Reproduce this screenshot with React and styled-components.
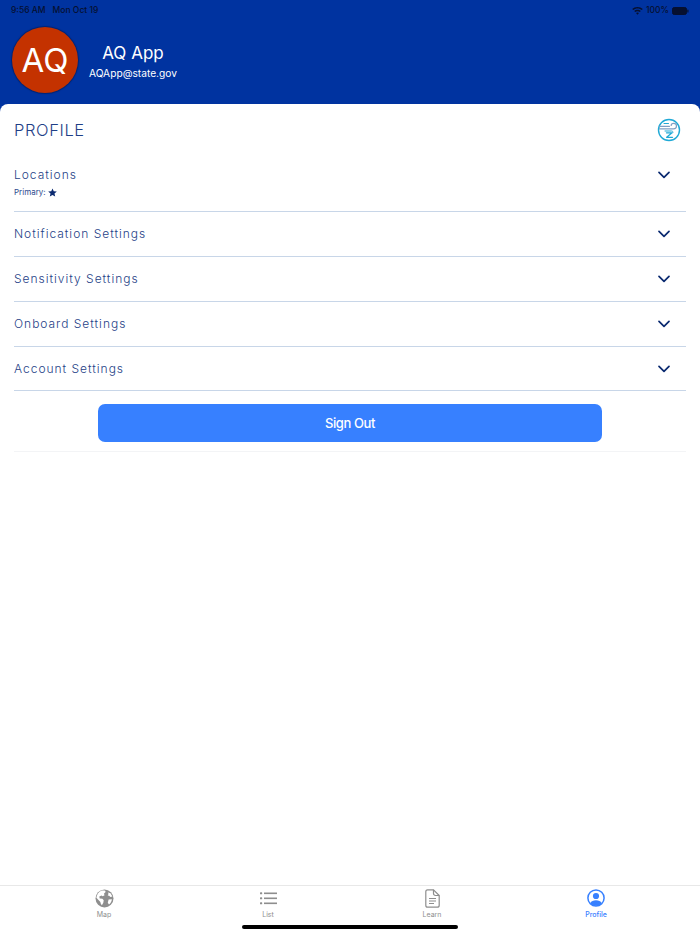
import React from "react";
import styled, { createGlobalStyle } from "styled-components";

const Global = createGlobalStyle`
  html, body { margin: 0; padding: 0; background: #fff; }
  body { font-family: Inter, "Liberation Sans", sans-serif; -webkit-font-smoothing: antialiased; }
  * { box-sizing: border-box; }
`;

const Page = styled.div`
  width: 700px;
  height: 934px;
  display: flex;
  flex-direction: column;
  overflow: hidden;
  background: #0033a0;
`;
const StatusBar = styled.div`
  height: 18px;
  padding: 3px 11px 0 11px;
  display: flex;
  justify-content: space-between;
  font-size: 8.5px;
  font-weight: 500;
  line-height: 11px;
  color: #061030;
`;
const StatusGroup = styled.div`
  display: flex;
  align-items: center;
  gap: ${(p) => p.$gap || 4}px;
`;
const Header = styled.div`
  height: 86px;
  padding: 9px 0 0 12px;
  display: flex;
  align-items: flex-start;
`;
const Avatar = styled.div`
  width: 66px;
  height: 66px;
  border-radius: 50%;
  background: #c43200;
  color: #fff;
  font-size: 33px;
  display: flex;
  align-items: center;
  justify-content: center;
  box-shadow: 0 0 1px 1px rgba(0, 20, 70, 0.5);
`;
const HeaderText = styled.div`
  margin: 15px 0 0 11px;
  display: flex;
  flex-direction: column;
  align-items: center;
  color: #fff;
`;
const UserName = styled.div`
  font-size: 17px;
  line-height: 22px;
`;
const UserMail = styled.div`
  margin-top: 2px;
  font-size: 10.2px;
  line-height: 14px;
`;
const Sheet = styled.div`
  flex: 1;
  background: #fff;
  border-radius: 8px 8px 0 0;
  display: flex;
  flex-direction: column;
  min-height: 0;
`;
const Content = styled.div`
  flex: 1;
  padding: 0 14px;
`;
const TitleRow = styled.div`
  height: 52px;
  padding-right: 5px;
  display: flex;
  align-items: center;
  justify-content: space-between;
`;
const Title = styled.h1`
  margin: 0;
  font-size: 16.5px;
  font-weight: 300;
  letter-spacing: 0.6px;
  color: #1f3f87;
`;
const Row = styled.div`
  height: ${(p) => (p.$tall ? "56px" : "45px")};
  border-bottom: 1px solid #c8d6e8;
  padding: ${(p) => (p.$tall ? "12px" : "0")} 16px 0 0;
  display: flex;
  align-items: ${(p) => (p.$tall ? "flex-start" : "center")};
  justify-content: space-between;
  &:nth-child(6) { height: 44px; }
`;
const RowLabel = styled.div`
  font-size: 12px;
  font-weight: 300;
  line-height: 14px;
  letter-spacing: 0.98px;
  color: #1f3f87;
`;
const RowSub = styled.div`
  margin-top: 5px;
  display: flex;
  align-items: center;
  gap: 2px;
  font-size: 8px;
  line-height: 11px;
  color: #2c4a8e;
  svg { margin-top: -1px; }
`;
const ChevronBox = styled.div`
  display: flex;
  margin-top: ${(p) => (p.$tall ? "3px" : "0")};
`;
const ButtonWrap = styled.div`
  padding: 13px 84px 9px;
  border-bottom: 1px solid #f3f4f6;
`;
const SignOut = styled.button`
  width: 100%;
  height: 38px;
  border: 0;
  border-radius: 7px;
  background: #3780ff;
  color: #fff;
  font-family: inherit;
  font-size: 13px;
  font-weight: 500;
  letter-spacing: -0.4px;
`;
const TabBar = styled.div`
  height: 49px;
  padding: 0 22px;
  border-top: 1px solid #e8e8e8;
  background: #fff;
  display: grid;
  grid-template-columns: repeat(4, 164px);
  position: relative;
`;
const Tab = styled.div`
  padding-top: 3px;
  display: flex;
  flex-direction: column;
  align-items: center;
  color: ${(p) => (p.$active ? "#3780ff" : "#8e8e8e")};
`;
const TabIcon = styled.div`
  height: 19px;
  display: flex;
  align-items: flex-start;
`;
const TabLabel = styled.div`
  margin-top: 2px;
  font-size: 7px;
  line-height: 9px;
  font-weight: ${(p) => (p.$active ? 500 : 400)};
`;
const HomeBar = styled.div`
  position: absolute;
  left: 242px;
  bottom: 5px;
  width: 216px;
  height: 4px;
  border-radius: 2px;
  background: #000;
`;

const Chevron = () => (
  <svg width="12" height="8" viewBox="0 0 12 8" fill="none" stroke="#0b2a70" strokeWidth="1.7" strokeLinecap="round" strokeLinejoin="round">
    <path d="M1 1.300 6 6.300 11 1.300" />
  </svg>
);

const Wifi = () => (
  <svg width="11" height="8" viewBox="0 0 11 8" fill="#061030">
    <path d="M5.500 0C3.400 0 1.600.8.2 2.100l1 1C2.300 2 3.800 1.400 5.500 1.400S8.700 2 9.800 3.100l1-1C9.400.8 7.600 0 5.500 0Z" />
    <path d="M5.500 2.800c-1.300 0-2.400.5-3.300 1.300l1 1c.6-.5 1.400-.9 2.300-.9s1.700.4 2.300.9l1-1C7.900 3.300 6.800 2.800 5.500 2.800Z" />
    <path d="M5.500 5.500c-.6 0-1.100.2-1.500.6L5.500 7.700 7 6.100c-.4-.4-.9-.6-1.500-.6Z" />
  </svg>
);

const Battery = () => (
  <svg width="17" height="8" viewBox="0 0 17 8">
    <rect x=".5" y=".5" width="14" height="7" rx="1.800" fill="#061030" stroke="#061030" />
    <rect x="15.300" y="2.500" width="1.200" height="3" rx=".5" fill="#061030" />
  </svg>
);

const WindIcon = () => (
  <svg width="24" height="24" viewBox="0 0 24 24" fill="none" stroke="#1fa9d6" strokeWidth="1" strokeLinecap="round" strokeLinejoin="round">
    <circle cx="12" cy="12" r="10.500" strokeWidth="1.400" />
    <path d="M2.500 8.300h10" stroke="#7f9fc4" strokeWidth="1.200" />
    <path d="M2.500 10.800h14c2 0 3-1.300 3-2.800s-1.300-2.600-2.800-2.600-2.500 1-2.500 2" stroke="#7f9fc4" strokeWidth="1.200" />
    <path d="M7 5.500h4.500" />
    <path d="M8 13h6.500c1.300 0 1.800 1 1.300 1.800" />
    <path d="M9.500 14.800h5.500l-5.300 4.500h5.800" strokeWidth="1.300" />
  </svg>
);

const Star = () => (
  <svg width="9" height="9" viewBox="0 0 24 24" fill="#0b2a70">
    <path d="M12 1l3.300 7.500 8.200.8-6.200 5.400 1.900 8L12 18.500 4.800 22.700l1.900-8L.5 9.300l8.200-.8L12 1Z" />
  </svg>
);

const GlobeIcon = () => (
  <svg width="19" height="19" viewBox="0 0 19 19">
    <circle cx="9.500" cy="9.500" r="9" fill="#8e8e8e" />
    <path d="M6 1.800c1.300-.4 3.200-.5 4.200 0l.4 1.300-1.700 1.600.7 1.500-1.900 1.100-1.200-.8-2.200.9.400 2.100 2.700.3 1.300 1.400-.4 2.600-1.400 2.400c-1-.6-1.300-1.800-1.500-3.100L3.700 11.200 1.400 8.800C1.800 5.800 3.500 3 6 1.800Z" fill="#fff" />
    <path d="M13 3.400l2.500.9 1.900 3.300-2 .4-1.200-1.300-1.500-.3.800-1.500Z M13.600 10.500l3.300-.2c-.2 2.100-1.300 4-2.900 5.300l-1.200-1.800.8-3.300Z" fill="#fff" />
  </svg>
);

const ListIcon = () => (
  <svg width="17" height="19" viewBox="0 0 17 19" fill="#8e8e8e">
    <rect x="0" y="3.300" width="2.200" height="2" rx=".6" />
    <rect x="0" y="8.300" width="2.200" height="2" rx=".6" />
    <rect x="0" y="13.300" width="2.200" height="2" rx=".6" />
    <rect x="4" y="3.500" width="13" height="1.600" />
    <rect x="4" y="8.500" width="13" height="1.600" />
    <rect x="4" y="13.500" width="13" height="1.600" />
  </svg>
);

const DocIcon = () => (
  <svg width="15" height="19" viewBox="0 0 15 19" fill="none" stroke="#8e8e8e" strokeWidth="1.200" strokeLinejoin="round">
    <path d="M2.500.8h6l5.700 5.700v9.700c0 1.100-.9 2-2 2H2.500c-1.100 0-1.700-.9-1.700-2V2.800c0-1.100.6-2 1.700-2Z" />
    <path d="M8.500.8v3.700c0 1.200.8 2 2 2h3.700" />
    <path d="M4 9.500h7M4 12h7M4 14.500h5" />
  </svg>
);

const ProfileIcon = () => (
  <svg width="18" height="18" viewBox="0 0 18 18">
    <circle cx="9" cy="9" r="8.100" fill="none" stroke="#3780ff" strokeWidth="1.500" />
    <circle cx="9" cy="7" r="3.100" fill="#3780ff" />
    <path d="M3.200 14.200C4.300 12 6.400 11.300 9 11.300s4.700.7 5.800 2.900C13.400 15.800 11.400 16.800 9 16.800s-4.400-1-5.800-2.600Z" fill="#3780ff" />
  </svg>
);

const settings = ["Notification Settings", "Sensitivity Settings", "Onboard Settings", "Account Settings"];

const tabs = [
  { label: "Map", icon: <GlobeIcon /> },
  { label: "List", icon: <ListIcon /> },
  { label: "Learn", icon: <DocIcon /> },
  { label: "Profile", icon: <ProfileIcon />, active: true },
];

const App = () => {
  return (
    <Page>
      <Global />
      <StatusBar>
        <StatusGroup $gap={7}>
          <span>9:56 AM</span>
          <span>Mon Oct 19</span>
        </StatusGroup>
        <StatusGroup $gap={3}>
          <Wifi />
          <span>100%</span>
          <Battery />
        </StatusGroup>
      </StatusBar>

      <Header>
        <Avatar>AQ</Avatar>
        <HeaderText>
          <UserName>AQ App</UserName>
          <UserMail>AQApp@state.gov</UserMail>
        </HeaderText>
      </Header>

      <Sheet>
        <Content>
          <TitleRow>
            <Title>PROFILE</Title>
            <WindIcon />
          </TitleRow>
          <Row $tall>
            <div>
              <RowLabel>Locations</RowLabel>
              <RowSub>
                Primary: <Star />
              </RowSub>
            </div>
            <ChevronBox $tall>
              <Chevron />
            </ChevronBox>
          </Row>
          {settings.map((s) => (
            <Row key={s}>
              <RowLabel>{s}</RowLabel>
              <ChevronBox>
                <Chevron />
              </ChevronBox>
            </Row>
          ))}
          <ButtonWrap>
            <SignOut>Sign Out</SignOut>
          </ButtonWrap>
        </Content>

        <TabBar>
          {tabs.map((t) => (
            <Tab key={t.label} $active={t.active}>
              <TabIcon>{t.icon}</TabIcon>
              <TabLabel $active={t.active}>{t.label}</TabLabel>
            </Tab>
          ))}
          <HomeBar />
        </TabBar>
      </Sheet>
    </Page>
  );
};

export default App;
